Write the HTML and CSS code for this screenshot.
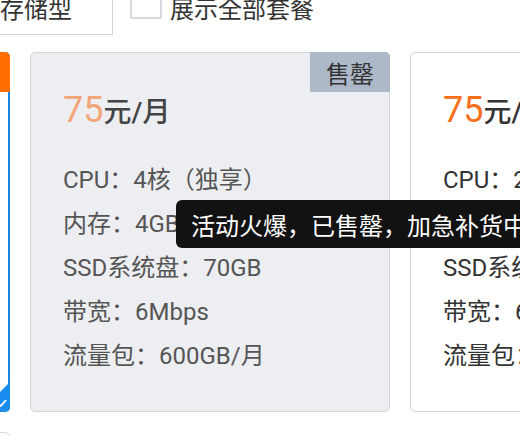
FILE: index.html
```html
<!DOCTYPE html>
<html lang="zh-CN">
<head>
<meta charset="utf-8">
<title>套餐选择</title>
<link rel="stylesheet" href="styles.css">
</head>
<body>
<div class="page">
  <div class="filters">
    <div class="type-btn">存储型</div>
    <label class="show-all"><span class="checkbox"></span><span>展示全部套餐</span></label>
  </div>
  <div class="plans">
    <div class="plan selected">
      <span class="badge badge-hot">热销</span>
      <div class="price"><span class="num">50</span><span class="unit">元/月</span></div>
      <ul class="specs">
        <li>CPU：2核</li>
        <li>内存：2GB</li>
        <li>SSD系统盘：50GB</li>
        <li>带宽：4Mbps</li>
        <li>流量包：400GB/月</li>
      </ul>
      <span class="check">
        <svg viewBox="0 0 12 12" width="12" height="12"><path d="M2 6.5 L4.8 9 L10 3" fill="none" stroke="#fff" stroke-width="1.8"/></svg>
      </span>
    </div>
    <div class="plan soldout">
      <span class="badge badge-sold">售罄</span>
      <div class="price"><span class="num">75</span><span class="unit">元/月</span></div>
      <ul class="specs">
        <li>CPU：4核（独享）</li>
        <li>内存：4GB</li>
        <li>SSD系统盘：70GB</li>
        <li>带宽：6Mbps</li>
        <li>流量包：600GB/月</li>
      </ul>
      <div class="tooltip">活动火爆，已售罄，加急补货中</div>
    </div>
    <div class="plan">
      <div class="price"><span class="num">75</span><span class="unit">元/月</span></div>
      <ul class="specs">
        <li>CPU：2核</li>
        <li>内存：4GB</li>
        <li>SSD系统盘：80GB</li>
        <li>带宽：6Mbps</li>
        <li>流量包：1000GB/月</li>
      </ul>
    </div>
    <div class="plan"></div>
  </div>
</div>
</body>
</html>
```

FILE: styles.css
```css
html, body {
  margin: 0;
  padding: 0;
  background: #fff;
  overflow: hidden;
}
body {
  width: 520px;
  height: 436px;
  font-family: Roboto, "Noto Sans CJK SC", sans-serif;
  color: #333;
}
.page {
  margin-left: -350px;
}
.filters {
  display: flex;
  align-items: center;
  margin-top: -21px;
  margin-left: 309px;
  height: 56px;
}
.type-btn {
  box-sizing: border-box;
  width: 154px;
  height: 56px;
  border: 1px solid #d3d6dc;
  display: flex;
  align-items: center;
  justify-content: center;
  font-size: 24px;
  color: #333;
}
.show-all {
  display: flex;
  align-items: center;
  margin-left: 17px;
  font-size: 24px;
  color: #333;
}
.checkbox {
  box-sizing: border-box;
  width: 32px;
  height: 32px;
  border: 2px solid #d4d8e0;
  border-radius: 2px;
  margin-right: 8px;
  margin-top: -8px;
}
.plans {
  display: grid;
  grid-template-columns: repeat(3, 360px);
  column-gap: 20px;
  row-gap: 20px;
  margin-top: 17px;
}
.plan {
  position: relative;
  box-sizing: border-box;
  height: 360px;
  border: 1px solid #d3d6dc;
  border-radius: 5px;
  background: #fff;
  padding: 35px 32px 0;
}
.plan.selected {
  border: 2px solid #1784e8;
}
.plan.soldout {
  background: #edeef2;
  color: #555;
}
.badge {
  position: absolute;
  top: -1px;
  right: -1px;
  width: 80px;
  height: 40px;
  display: flex;
  align-items: center;
  justify-content: center;
  font-size: 24px;
  border-top-right-radius: 5px;
}
.badge-sold {
  background: #adb9c9;
  color: #333;
}
.badge-hot {
  top: -2px;
  right: -2px;
  background: #ff6d00;
  color: #fff;
}
.price {
  height: 44px;
  line-height: 44px;
  white-space: nowrap;
}
.price .num {
  font-size: 36px;
  color: #f6701c;
}
.price .unit {
  font-size: 28px;
  font-weight: 500;
  color: #333;
}
.soldout .price .num {
  color: #f3a578;
}
.soldout .price .unit {
  color: #444;
}
.specs {
  list-style: none;
  margin: 26px 0 0;
  padding: 0;
}
.specs li {
  height: 44px;
  line-height: 44px;
  font-size: 24px;
  white-space: nowrap;
}
.check {
  position: absolute;
  right: -2px;
  bottom: -2px;
  width: 30px;
  height: 30px;
  background: #1a8cf0;
  clip-path: polygon(100% 0, 100% 100%, 0 100%);
  border-bottom-right-radius: 5px;
  display: flex;
  align-items: flex-end;
  justify-content: flex-end;
  padding: 0 2px 3px 0;
  box-sizing: border-box;
}
.tooltip {
  position: absolute;
  left: 145px;
  top: 147px;
  z-index: 10;
  height: 48px;
  display: flex;
  align-items: center;
  padding: 0 15px;
  background: #121212;
  color: #fff;
  font-size: 24px;
  border-radius: 6px;
  white-space: nowrap;
}
```
